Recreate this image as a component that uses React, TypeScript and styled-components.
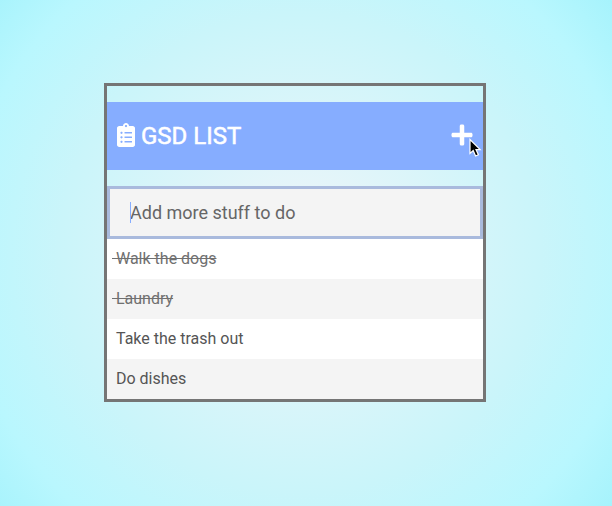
import React, { useState } from 'react';
import styled, { createGlobalStyle } from 'styled-components';
import { FaClipboardList, FaPlus } from 'react-icons/fa';

const GlobalStyle = createGlobalStyle`
  * { box-sizing: border-box; }
  body {
    margin: 0;
    font-family: Roboto, sans-serif;
    color: #5a5a5a;
  }
`;

const Page = styled.main`
  min-height: 100vh;
  padding: 83px 126px 83px 104px;
  background: radial-gradient(circle at 49% 50%, #f0f5f9 0%, #caf5fa 60%, #b9f7fe 84%, #a6f3fc 100%);
`;

const Card = styled.section`
  width: 100%;
  padding-top: 16px;
  border: 3px solid #757575;
`;

const Header = styled.header`
  display: flex;
  align-items: center;
  justify-content: space-between;
  height: 68px;
  margin-bottom: 16px;
  padding: 0 9px 2px 10px;
  background: #86adff;
  color: #fff;
`;

const Title = styled.h1`
  display: flex;
  align-items: center;
  gap: 6px;
  margin: 0;
  font-size: 24px;
  line-height: 30px;
  font-weight: 400;
  -webkit-text-stroke: 0.5px currentColor;

  svg {
    width: 18px;
    height: 24px;
    stroke: none;
  }
`;

const TitleText = styled.span`
  padding-top: 2px;
`;

const AddButton = styled.button`
  position: relative;
  display: flex;
  padding: 0;
  border: 0;
  background: none;
  color: inherit;
  font-size: 24px;
  cursor: pointer;
`;

const Pointer = styled.svg`
  position: absolute;
  left: 18px;
  top: 15px;
  width: 14px;
  height: 20px;
  pointer-events: none;
`;

const Field = styled.label`
  position: relative;
  display: block;
`;

const Caret = styled.span`
  position: absolute;
  left: 23px;
  top: 16px;
  width: 1px;
  height: 21px;
  background: #86adff;
`;

const TextInput = styled.input`
  display: block;
  width: 100%;
  height: 53px;
  padding: 0 20px;
  border: 3px solid #a9badd;
  border-radius: 0;
  outline: none;
  background: #f4f4f4;
  color: #666;
  font-family: inherit;
  font-size: 18px;
  &::placeholder { color: #666; opacity: 1; }
`;

const List = styled.ul`
  margin: 0;
  padding: 0;
  list-style: none;
`;

const Item = styled.li<{ $done: boolean }>`
  padding: 0 5px;
  line-height: 40px;
  font-size: 16px;
  white-space: pre;
  background: #fff;
  color: ${p => (p.$done ? '#707070' : '#555')};
  text-decoration: ${p => (p.$done ? 'line-through' : 'none')};
  &:nth-child(even) { background: #f4f4f4; }
`;

const tasks = [
  { text: 'Walk the dogs', done: true },
  { text: 'Laundry', done: true },
  { text: 'Take the trash out', done: false },
  { text: 'Do dishes', done: false },
];

export default function App() {
  const [value, setValue] = useState('');
  return (
    <Page>
      <GlobalStyle />
      <Card>
        <Header>
          <Title>
            <FaClipboardList aria-hidden />
            <TitleText>GSD LIST</TitleText>
          </Title>
          <AddButton type="button" aria-label="Add">
            <FaPlus aria-hidden />
            <Pointer viewBox="0 0 14 20" aria-hidden>
              <path
                d="M2 1.5V15.5L5.2 12.6L7.6 18L10.4 16.8L8 11.6H12.2Z"
                fill="#000"
                stroke="#fff"
                strokeWidth="1.2"
              />
            </Pointer>
          </AddButton>
        </Header>
        <Field>
          <TextInput
            aria-label="Add more stuff to do"
            placeholder="Add more stuff to do"
            value={value}
            onChange={e => setValue(e.target.value)}
          />
          {value === '' && <Caret />}
        </Field>
        <List>
          {tasks.map(t => (
            <Item key={t.text} $done={t.done}>{'\u00a0' + t.text}</Item>
          ))}
        </List>
      </Card>
    </Page>
  );
}
